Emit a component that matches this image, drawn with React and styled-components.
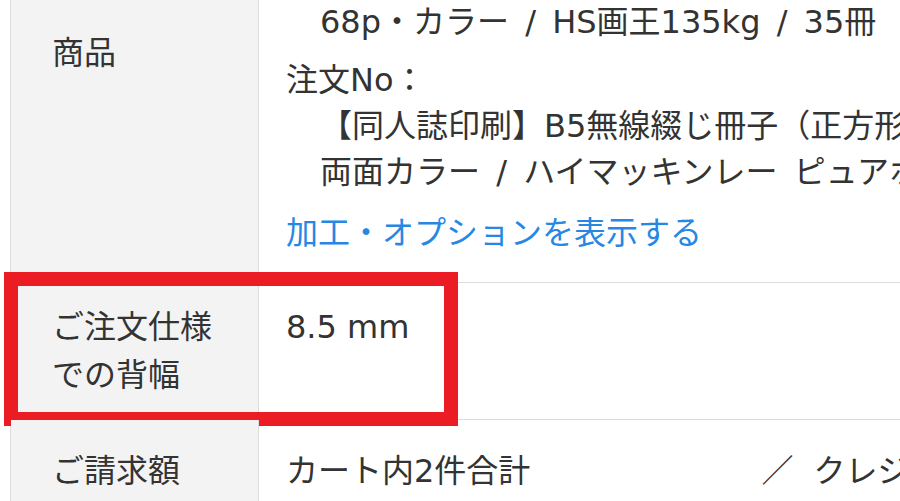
// Imports
import React from "react";
import styled, { createGlobalStyle } from "styled-components";

// Data
const items = [
	{
		lines: [
			"【同人誌印刷】B5無線綴じ冊子（正方形）",
			"両面カラー / ハイマッキンレー ピュアホワイト",
			"68p・カラー / HS画王135kg / 35冊",
		],
	},
	{
		lines: [
			"【同人誌印刷】B5無線綴じ冊子（正方形）",
			"両面カラー / ハイマッキンレー ピュアホワイト",
		],
	},
];

// Component
const App = () => {
	return (
		<React.Fragment>
			<GlobalStyle />
			<Viewport>
				<Table>
					<Row>
						<Label>商品</Label>
						<Cell $top={37} $bottom={26}>
							{
								items.map((item, i) => (
									<Item key={i}>
										<Line>注文No：</Line>
										{ item.lines.map((l) => <Line $indent key={l}>{l}</Line>) }
									</Item>
								))
							}
							<OptionLink href="#">加工・オプションを表示する</OptionLink>
						</Cell>
					</Row>
					<Row>
						<Label $tall>ご注文仕様<br />での背幅</Label>
						<Cell $top={21} $bottom={20}>
							<Line>8.5 mm</Line>
						</Cell>
						{/* red annotation frame over the row */}
						<Highlight />
					</Row>
					<Row>
						<Label>ご請求額</Label>
						<Cell $top={28} $bottom={28}>
							<Line>
								カート内2件合計
								<Sep>／</Sep>
								クレジットカード決済
							</Line>
						</Cell>
					</Row>
				</Table>
			</Viewport>
		</React.Fragment>
	);
};

// Styled
const GlobalStyle = createGlobalStyle`
	body{
		margin: 0;
		background: #fff;
		font-family: "DejaVu Sans", "Noto Sans CJK JP", sans-serif;
		color: #333;
	}
`;

const Viewport = styled.div`
	width: 900px;
	height: 501px;
	overflow: hidden;
`;

const Table = styled.div`
	margin: -176px 0 0 10px;
	border-left: 1px solid #dcdcdc;
	font-size: 32px;
`;

const Row = styled.div`
	position: relative;
	display: grid;
	grid-template-columns: 248px 1fr;
	border-bottom: 1px solid #dcdcdc;
`;

const Label = styled.div`
	box-sizing: border-box;
	display: flex;
	align-items: center;
	padding: ${ (p) => (p.$tall ? "20px 0 20px 41px" : "0 0 0 41px") };
	background: #f3f3f3;
	border-right: 1px solid #dcdcdc;
	line-height: 48px;
	white-space: nowrap;
`;

const Cell = styled.div`
	padding: ${ (p) => p.$top }px 0 ${ (p) => p.$bottom }px 27px;
	line-height: 46px;
	white-space: nowrap;
	overflow: hidden;
`;

const Item = styled.div`
	word-spacing: 6px;
	& + &{
		margin-top: 12px;
	}
`;

const Line = styled.div`
	padding-left: ${ (p) => (p.$indent ? "34px" : "0") };
`;

const Sep = styled.span`
	margin: 0 20px 0 231px;
`;

const OptionLink = styled.a`
	display: block;
	margin-top: 15px;
	color: #2688e4;
	text-decoration: none;
`;

const Highlight = styled.div`
	position: absolute;
	left: -7px;
	top: -11px;
	width: 454px;
	height: 154px;
	box-sizing: border-box;
	border: 14px solid #ec1c25;
	pointer-events: none;
`;

// Export
export default App;
